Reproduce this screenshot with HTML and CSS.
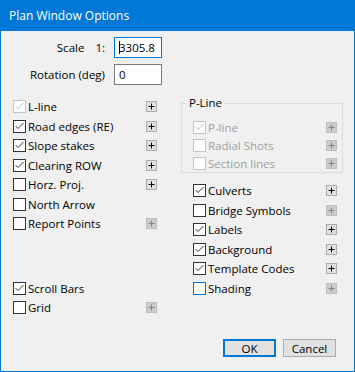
FILE: index.html
```html
<!DOCTYPE html>
<html lang="en">
<head>
    <meta charset="UTF-8">
    <title>Plan Window Options</title>
    <link rel="stylesheet" href="styles.css">
</head>
<body>
    <div class="dialog">
        <div class="titlebar">Plan Window Options</div>
        <div class="content">
            <div class="fields">
                <label class="field-label">Scale<span class="ratio">1:</span></label>
                <div class="textbox focused"><span class="caret"></span>3305.8</div>
                <label class="field-label">Rotation (deg)</label>
                <div class="textbox">0</div>
            </div>

            <div class="columns">
                <div class="col">
                    <div class="opt">
                        <span class="box dim"><svg viewBox="0 0 11 11"><polyline points="1.5,5 4,7.5 9.5,2"/></svg></span>
                        <span class="opt-label">L-line</span>
                        <span class="plus"><svg viewBox="0 0 9 9"><path d="M1.5 4.5h6M4.5 1.5v6"/></svg></span>
                    </div>
                    <div class="opt">
                        <span class="box"><svg viewBox="0 0 11 11"><polyline points="1.5,5 4,7.5 9.5,2"/></svg></span>
                        <span class="opt-label">Road edges (RE)</span>
                        <span class="plus"><svg viewBox="0 0 9 9"><path d="M1.5 4.5h6M4.5 1.5v6"/></svg></span>
                    </div>
                    <div class="opt">
                        <span class="box"><svg viewBox="0 0 11 11"><polyline points="1.5,5 4,7.5 9.5,2"/></svg></span>
                        <span class="opt-label">Slope stakes</span>
                        <span class="plus"><svg viewBox="0 0 9 9"><path d="M1.5 4.5h6M4.5 1.5v6"/></svg></span>
                    </div>
                    <div class="opt">
                        <span class="box"><svg viewBox="0 0 11 11"><polyline points="1.5,5 4,7.5 9.5,2"/></svg></span>
                        <span class="opt-label">Clearing ROW</span>
                        <span class="plus"><svg viewBox="0 0 9 9"><path d="M1.5 4.5h6M4.5 1.5v6"/></svg></span>
                    </div>
                    <div class="opt">
                        <span class="box"></span>
                        <span class="opt-label">Horz. Proj.</span>
                        <span class="plus"><svg viewBox="0 0 9 9"><path d="M1.5 4.5h6M4.5 1.5v6"/></svg></span>
                    </div>
                    <div class="opt">
                        <span class="box"></span>
                        <span class="opt-label">North Arrow</span>
                    </div>
                    <div class="opt">
                        <span class="box"></span>
                        <span class="opt-label">Report Points</span>
                        <span class="plus dim"><svg viewBox="0 0 9 9"><path d="M1.5 4.5h6M4.5 1.5v6"/></svg></span>
                    </div>

                    <div class="opt spaced">
                        <span class="box"><svg viewBox="0 0 11 11"><polyline points="1.5,5 4,7.5 9.5,2"/></svg></span>
                        <span class="opt-label">Scroll Bars</span>
                    </div>
                    <div class="opt">
                        <span class="box"></span>
                        <span class="opt-label">Grid</span>
                        <span class="plus dim"><svg viewBox="0 0 9 9"><path d="M1.5 4.5h6M4.5 1.5v6"/></svg></span>
                    </div>
                </div>

                <div class="col col-right">
                    <fieldset class="group">
                        <legend>P-Line</legend>
                        <div class="opt short">
                            <span class="box dim"><svg viewBox="0 0 11 11"><polyline points="1.5,5 4,7.5 9.5,2"/></svg></span>
                            <span class="opt-label dim-text">P-line</span>
                            <span class="plus dim"><svg viewBox="0 0 9 9"><path d="M1.5 4.5h6M4.5 1.5v6"/></svg></span>
                        </div>
                        <div class="opt short">
                            <span class="box dim"></span>
                            <span class="opt-label dim-text">Radial Shots</span>
                            <span class="plus dim"><svg viewBox="0 0 9 9"><path d="M1.5 4.5h6M4.5 1.5v6"/></svg></span>
                        </div>
                        <div class="opt short">
                            <span class="box dim"></span>
                            <span class="opt-label dim-text">Section lines</span>
                            <span class="plus dim"><svg viewBox="0 0 9 9"><path d="M1.5 4.5h6M4.5 1.5v6"/></svg></span>
                        </div>
                    </fieldset>

                    <div class="opt">
                        <span class="box"><svg viewBox="0 0 11 11"><polyline points="1.5,5 4,7.5 9.5,2"/></svg></span>
                        <span class="opt-label">Culverts</span>
                        <span class="plus"><svg viewBox="0 0 9 9"><path d="M1.5 4.5h6M4.5 1.5v6"/></svg></span>
                    </div>
                    <div class="opt">
                        <span class="box"></span>
                        <span class="opt-label">Bridge Symbols</span>
                        <span class="plus dim"><svg viewBox="0 0 9 9"><path d="M1.5 4.5h6M4.5 1.5v6"/></svg></span>
                    </div>
                    <div class="opt">
                        <span class="box"><svg viewBox="0 0 11 11"><polyline points="1.5,5 4,7.5 9.5,2"/></svg></span>
                        <span class="opt-label">Labels</span>
                        <span class="plus"><svg viewBox="0 0 9 9"><path d="M1.5 4.5h6M4.5 1.5v6"/></svg></span>
                    </div>
                    <div class="opt">
                        <span class="box"><svg viewBox="0 0 11 11"><polyline points="1.5,5 4,7.5 9.5,2"/></svg></span>
                        <span class="opt-label">Background</span>
                        <span class="plus"><svg viewBox="0 0 9 9"><path d="M1.5 4.5h6M4.5 1.5v6"/></svg></span>
                    </div>
                    <div class="opt">
                        <span class="box"><svg viewBox="0 0 11 11"><polyline points="1.5,5 4,7.5 9.5,2"/></svg></span>
                        <span class="opt-label">Template Codes</span>
                        <span class="plus"><svg viewBox="0 0 9 9"><path d="M1.5 4.5h6M4.5 1.5v6"/></svg></span>
                    </div>
                    <div class="opt">
                        <span class="box hot"></span>
                        <span class="opt-label">Shading</span>
                        <span class="plus dim"><svg viewBox="0 0 9 9"><path d="M1.5 4.5h6M4.5 1.5v6"/></svg></span>
                    </div>
                </div>
            </div>

            <div class="buttons">
                <button class="btn default">OK</button>
                <button class="btn">Cancel</button>
            </div>
        </div>
    </div>
</body>
</html>
```

FILE: styles.css
```css
body {
    margin: 0;
    font-family: "Open Sans", "Liberation Sans", sans-serif;
    font-size: 11.5px;
    color: #000;
}
.dialog {
    width: 355px;
    height: 372px;
    box-sizing: border-box;
    border: 1px solid #0078d7;
    border-top: none;
    background-color: #f0f0f0;
    display: flex;
    flex-direction: column;
}
.titlebar {
    height: 31px;
    flex: none;
    background-color: #0078d7;
    color: white;
    font-size: 12px;
    padding-left: 8px;
    display: flex;
    align-items: center;
}
.content {
    flex: 1;
    display: flex;
    flex-direction: column;
}

/* scale / rotation */
.fields {
    display: grid;
    grid-template-columns: 104px 48px;
    column-gap: 9px;
    row-gap: 6px;
    align-items: center;
    padding-top: 6px;
}
.field-label {
    text-align: right;
}
.ratio {
    margin-left: 11px;
}
.textbox {
    height: 21px;
    box-sizing: border-box;
    border: 1px solid #7a7a7a;
    background-color: white;
    padding-left: 4px;
    display: flex;
    align-items: center;
}
.textbox.focused {
    border-color: #0078d7;
}
.caret {
    width: 1px;
    height: 13px;
    background-color: #000;
    margin-right: -1px;
}

/* option columns */
.columns {
    display: grid;
    grid-template-columns: 144px 162px;
    column-gap: 24px;
    padding-left: 12px;
    margin-top: 12px;
}
.col {
    display: flex;
    flex-direction: column;
}
.opt {
    height: 19.5px;
    display: flex;
    align-items: center;
}
.opt.short {
    height: 18px;
}
.opt.spaced {
    margin-top: 45px;
}
.col-right > .opt {
    padding: 0 6px 0 12px;
}
.col-right > .group + .opt {
    margin-top: 8px;
}
.box {
    width: 13px;
    height: 13px;
    box-sizing: border-box;
    flex: none;
    border: 1px solid #333;
    background-color: white;
    color: #333;
    margin-right: 2px;
    display: flex;
}
.box svg {
    width: 11px;
    height: 11px;
    fill: none;
    stroke: currentColor;
    stroke-width: 1;
}
.box.dim {
    border-color: #c4c4c4;
    color: #bcbcbc;
}
.box.hot {
    border-color: #0078d7;
}
.dim-text {
    color: #a0a0a0;
}
.plus {
    width: 11px;
    height: 11px;
    box-sizing: border-box;
    flex: none;
    margin-left: auto;
    border: 1px solid #adadad;
    background-color: #e1e1e1;
    color: #000;
    display: flex;
}
.plus svg {
    width: 9px;
    height: 9px;
    fill: none;
    stroke: currentColor;
    stroke-width: 1;
}
.plus.dim {
    background-color: #cccccc;
    border-color: #bfbfbf;
    color: #838383;
}

/* P-Line group */
.group {
    margin: 0;
    padding: 9px 0 0 0;
    min-width: 0;
    border: 1px solid #dcdcdc;
}
.group legend {
    margin-left: 5px;
    padding: 0 2px;
    line-height: 12px;
}
.group .opt {
    padding: 0 5px 0 11px;
}

/* footer */
.buttons {
    margin-top: auto;
    display: flex;
    justify-content: flex-end;
    gap: 7px;
    padding: 0 18px 14px 0;
}
.btn {
    width: 53px;
    height: 18px;
    box-sizing: border-box;
    padding: 0;
    border: 1px solid #adadad;
    background-color: #e1e1e1;
    font: inherit;
    color: #000;
}
.btn.default {
    border: 2px solid #0078d7;
}
```
